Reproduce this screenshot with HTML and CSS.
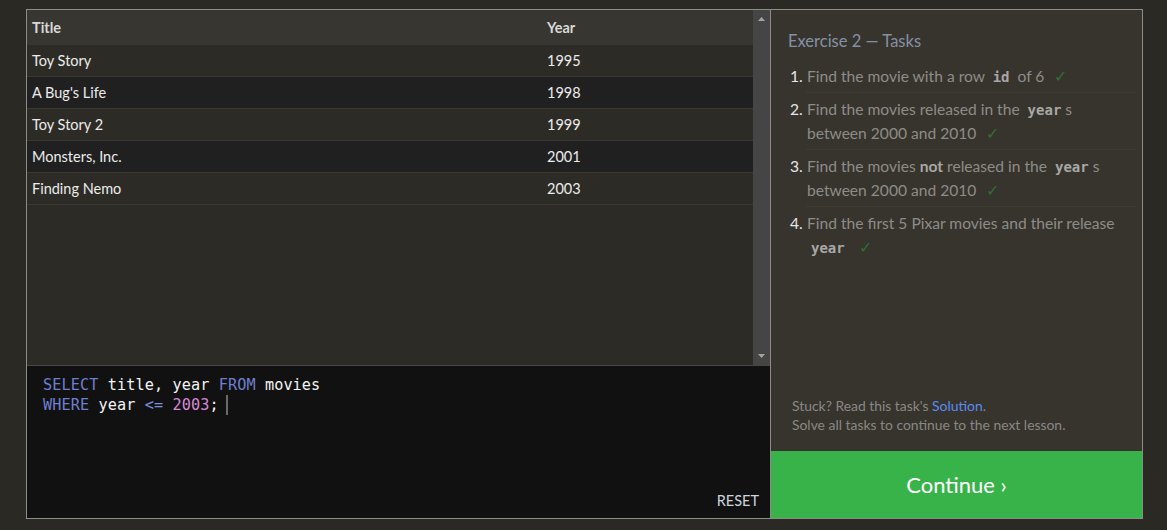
FILE: index.html
```html
<!DOCTYPE html>
<html>
<head>
<meta charset="utf-8">
<link rel="stylesheet" href="styles.css">
</head>
<body>
<div class="app">
  <div class="left">
    <div class="results">
      <div class="table">
        <div class="row head"><div class="c1">Title</div><div class="c2">Year</div></div>
        <div class="row odd"><div class="c1">Toy Story</div><div class="c2">1995</div></div>
        <div class="row even"><div class="c1">A Bug's Life</div><div class="c2">1998</div></div>
        <div class="row odd"><div class="c1">Toy Story 2</div><div class="c2">1999</div></div>
        <div class="row even"><div class="c1">Monsters, Inc.</div><div class="c2">2001</div></div>
        <div class="row odd"><div class="c1">Finding Nemo</div><div class="c2">2003</div></div>
      </div>
      <div class="scrollbar">
        <svg class="arrow" width="7" height="4" viewBox="0 0 7 4"><path d="M0 4 L3.5 0 L7 4 Z" fill="#a3a3a3"/></svg>
        <svg class="arrow" width="7" height="4" viewBox="0 0 7 4"><path d="M0 0 L7 0 L3.5 4 Z" fill="#a3a3a3"/></svg>
      </div>
    </div>
    <div class="editor">
      <div class="code">
        <div><span class="kw">SELECT</span> <span class="id">title, year</span> <span class="kw">FROM</span> <span class="id">movies</span></div>
        <div><span class="kw">WHERE</span> <span class="id">year</span> <span class="op">&lt;=</span> <span class="num">2003</span><span class="id">;</span> <span class="cursor"></span></div>
      </div>
      <div class="reset">RESET</div>
    </div>
  </div>
  <div class="right">
    <div class="tasks">
      <div class="title">Exercise 2 — Tasks</div>
      <ol class="list">
        <li><span class="n">1.</span><span class="t">Find the movie with a row <code>id</code> of 6 <span class="chk">✓</span></span></li>
        <li><span class="n">2.</span><span class="t">Find the movies released in the <code>year</code>s between 2000 and 2010 <span class="chk">✓</span></span></li>
        <li><span class="n">3.</span><span class="t">Find the movies <b>not</b> released in the <code>year</code>s between 2000 and 2010 <span class="chk">✓</span></span></li>
        <li><span class="n">4.</span><span class="t">Find the first 5 Pixar movies and their release <code>year</code> <span class="chk">✓</span></span></li>
      </ol>
    </div>
    <div class="help">
      <div>Stuck? Read this task's <span class="link">Solution</span>.</div>
      <div>Solve all tasks to continue to the next lesson.</div>
    </div>
    <div class="continue">Continue ›</div>
  </div>
</div>
</body>
</html>
```
FILE: styles.css
```css
* { box-sizing: border-box; }
html, body { margin: 0; padding: 0; }
body {
  background: #2b2924;
  font-family: Lato, "Noto Sans", sans-serif;
  width: 1167px;
  height: 530px;
  overflow: hidden;
}
.app {
  margin: 9px 0 0 26px;
  width: 1117px;
  height: 510px;
  border: 1px solid #8d8c86;
  display: flex;
}
.left {
  width: 744px;
  border-right: 1px solid #8d8c86;
  display: flex;
  flex-direction: column;
}
.results {
  height: 356px;
  border-bottom: 1px solid #4a4843;
  display: flex;
  background: #2d2b26;
}
.table { flex: 1; }
.row {
  display: flex;
  height: 32px;
  align-items: center;
  border-bottom: 1px solid #3a3833;
  color: #ececec;
  font-size: 14.5px;
  padding-bottom: 1px;
}
.row.head {
  height: 35px;
  background: #383630;
  font-weight: bold;
  color: #d8d8d8;
  border-bottom: none;
  padding-bottom: 0;
}
.row.odd { background: #2d2b26; }
.row.even { background: #202020; }
.c1 { width: 520px; padding-left: 5px; }
.c2 { flex: 1; padding-left: 0; }
.scrollbar {
  width: 17px;
  background: #454545;
  display: flex;
  flex-direction: column;
  justify-content: space-between;
  align-items: center;
  padding: 7px 0 7px;
}
.arrow { display: block; }
.editor {
  flex: 1;
  background: #111111;
  display: flex;
  flex-direction: column;
  justify-content: space-between;
  padding: 9px 11px 9px 16px;
}
.code {
  font-family: "DejaVu Sans Mono", monospace;
  font-size: 15.2px;
  line-height: 20px;
  color: #f2f2f2;
  letter-spacing: 0.1px;
}
.kw { color: #6f7fd0; }
.op { color: #7f8fe0; }
.num { color: #d68ad6; }
.id { color: #f4f4f4; }
.cursor {
  display: inline-block;
  width: 2px;
  height: 20px;
  background: #6a6a6a;
  vertical-align: top;
  margin-left: -2px;
}
.reset {
  align-self: flex-end;
  font-size: 14.5px;
  color: #d0d4dc;
}
.right {
  flex: 1;
  background: #37342e;
  display: flex;
  flex-direction: column;
}
.tasks {
  flex: 1;
  padding: 20px 7px 0 17px;
}
.title {
  font-size: 16.5px;
  color: #8491a4;
  line-height: 22px;
}
.list {
  list-style: none;
  margin: 12px 0 0 0;
  padding: 0;
}
.list li {
  display: flex;
  font-size: 15.6px;
  line-height: 24px;
  color: #8e8c87;
  padding: 0 0 5px 0;
  margin-bottom: 4px;
  position: relative;
}
.list li::after {
  content: "";
  position: absolute;
  left: 18px;
  right: 0;
  bottom: 0;
  border-bottom: 1px solid #3e3b35;
}
.list li:last-child::after { display: none; }
.n {
  width: 19px;
  flex: none;
  color: #e6e6e6;
  padding-left: 2px;
}
.t { flex: 1; }
code {
  font-family: "DejaVu Sans Mono", monospace;
  font-weight: bold;
  font-size: 14px;
  line-height: 1;
  color: #a8a8a4;
  padding: 0 4px;
}
b { color: #a8a8a4; }
.chk {
  color: #2f6f33;
  margin-left: 6px;
}
.help {
  padding: 0 0 17px 21px;
  font-size: 13.9px;
  line-height: 19px;
  color: #8a8884;
}
.link { color: #5a8cf0; }
.continue {
  height: 67px;
  background: #38b34a;
  color: #ffffff;
  font-size: 22px;
  display: flex;
  align-items: center;
  justify-content: center;
  padding-left: 0;
}
```
